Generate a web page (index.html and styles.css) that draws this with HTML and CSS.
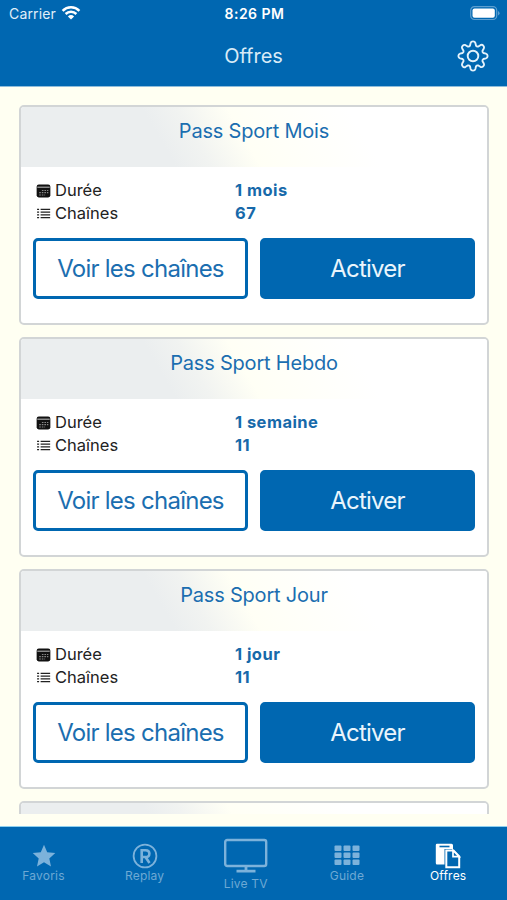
FILE: index.html
```html
<!DOCTYPE html>
<html lang="fr">
<head>
<meta charset="utf-8">
<title>Offres</title>
<link rel="stylesheet" href="styles.css">
</head>
<body>
<svg class="defs" aria-hidden="true">
  <symbol id="calendar" viewBox="0 0 14 14">
    <rect x=".6" y="1.5" width="12.8" height="12" rx="2" fill="#111"/>
    <path d="M1.2 3.900h11.600" stroke="#ccc" stroke-width=".9"/>
    <path d="M5.500 7h6M3 9h8.500M3 11.200h5.500" stroke="#888" stroke-width="1" stroke-dasharray="1.500 .9"/>
  </symbol>
  <symbol id="list" viewBox="0 0 14 12">
    <path d="M4.300 2.100h8.900M4.300 4.700h8.900M4.300 7.300h8.900M4.300 9.900h8.900" stroke="#222" stroke-width="1.200"/>
    <path d="M1 2.100h1.900M1 4.700h1.900M1 7.300h1.900M1 9.900h1.900" stroke="#222" stroke-width="1.200"/>
  </symbol>
</svg>
<div class="app">
  <header class="top">
    <div class="status">
      <div class="carrier"><span>Carrier</span>
        <svg width="20" height="16" viewBox="0 0 20 16" fill="none" stroke="#fff" stroke-width="2.500"><path d="M1.600 5.800a12 12 0 0 1 16.800 0M4.600 9a7.800 7.800 0 0 1 10.800 0"/><path d="M10 14.600 6.900 11.500a4.600 4.600 0 0 1 6.200 0z" fill="#fff" stroke="none"/></svg>
      </div>
      <div class="time">8:26 PM</div>
      <svg class="battery" width="30" height="15" viewBox="0 0 30 15"><rect x=".7" y=".7" width="26" height="12.800" rx="3.700" fill="none" stroke="#5d9fd0" stroke-width="1.200"/><rect x="2.500" y="2.500" width="22.300" height="9.200" rx="2" fill="#fff"/><path d="M28 5v4.400q1.600-.7 1.600-2.200T28 5" fill="#5d9fd0"/></svg>
    </div>
    <div class="nav">
      <h1>Offres</h1>
      <svg class="gear" width="32" height="32" viewBox="-16 -16 32 32" fill="none" stroke="#e4f2fb" stroke-width="1.900" stroke-linejoin="round"><circle r="5.300"/><path d="M-2.400 -12.900Q-1.900 -14.600 0 -14.600T2.400 -12.900L3 -10.400Q3.900 -9.100 5.300 -9.500L7.400 -10.800Q9 -11.700 10.300 -10.300T10.800 -7.400L9.500 -5.300Q9.100 -3.900 10.400 -3L12.900 -2.400Q14.600 -1.900 14.600 0T12.900 2.400L10.400 3Q9.100 3.900 9.500 5.300L10.800 7.400Q11.700 9 10.300 10.300T7.400 10.800L5.300 9.500Q3.900 9.100 3 10.400L2.400 12.900Q1.900 14.600 0 14.600T-2.400 12.900L-3 10.400Q-3.900 9.100 -5.300 9.500L-7.400 10.800Q-9 11.700 -10.300 10.300T-10.800 7.400L-9.500 5.300Q-9.100 3.900 -10.400 3L-12.900 2.400Q-14.600 1.900 -14.600 0T-12.900 -2.400L-10.400 -3Q-9.100 -3.900 -9.500 -5.300L-10.800 -7.400Q-11.700 -9 -10.300 -10.300T-7.400 -10.800L-5.300 -9.500Q-3.900 -9.100 -3 -10.400Z"/></svg>
    </div>
  </header>
  <main class="offers">
    <section class="card">
      <h2>Pass Sport Mois</h2>
      <dl>
        <dt><svg class="ico"><use href="#calendar"/></svg>Durée</dt><dd>1 mois</dd>
        <dt><svg class="ico list"><use href="#list"/></svg>Chaînes</dt><dd>67</dd>
      </dl>
      <div class="actions"><button class="outline">Voir les chaînes</button><button class="solid">Activer</button></div>
    </section>
    <section class="card">
      <h2>Pass Sport Hebdo</h2>
      <dl>
        <dt><svg class="ico"><use href="#calendar"/></svg>Durée</dt><dd>1 semaine</dd>
        <dt><svg class="ico list"><use href="#list"/></svg>Chaînes</dt><dd>11</dd>
      </dl>
      <div class="actions"><button class="outline">Voir les chaînes</button><button class="solid">Activer</button></div>
    </section>
    <section class="card">
      <h2>Pass Sport Jour</h2>
      <dl>
        <dt><svg class="ico"><use href="#calendar"/></svg>Durée</dt><dd>1 jour</dd>
        <dt><svg class="ico list"><use href="#list"/></svg>Chaînes</dt><dd>11</dd>
      </dl>
      <div class="actions"><button class="outline">Voir les chaînes</button><button class="solid">Activer</button></div>
    </section>
    <section class="card"><h2></h2></section>
  </main>
  <nav class="tabs">
    <a class="tab first"><svg width="26" height="26" viewBox="0 0 26 26"><path d="M13 1.800 16.200 9.200 24.300 10 18.300 15.500 20 23.500 13 19.300 6 23.500 7.700 15.500 1.700 10 9.800 9.200z" fill="currentColor"/></svg><span>Favoris</span></a>
    <a class="tab"><svg width="26" height="26" viewBox="0 0 26 26" fill="none" stroke="currentColor"><circle cx="13" cy="13" r="11.400" stroke-width="1.800"/><path d="M9.700 20V7.200h3.800q3.900 0 3.900 3.400t-3.900 3.400H9.700M13.500 14l4 6" stroke-width="2.600"/></svg><span>Replay</span></a>
    <a class="tab live"><svg width="44" height="36" viewBox="0 0 44 36" fill="none" stroke="currentColor"><rect x="1.200" y="2" width="41" height="26" rx="2" stroke-width="2.400"/><path d="M22 28v5M12.500 33.200h19" stroke-width="2.800"/></svg><span>Live TV</span></a>
    <a class="tab"><svg width="26" height="26" viewBox="0 0 26 26" fill="currentColor"><rect x=".5" y="2.500" width="7" height="5.500" rx="1"/><rect x="9.500" y="2.500" width="7" height="5.500" rx="1"/><rect x="18.500" y="2.500" width="7" height="5.500" rx="1"/><rect x=".5" y="9.500" width="7" height="5.500" rx="1"/><rect x="9.500" y="9.500" width="7" height="5.500" rx="1"/><rect x="18.500" y="9.500" width="7" height="5.500" rx="1"/><rect x=".5" y="16.500" width="7" height="5.500" rx="1"/><rect x="9.500" y="16.500" width="7" height="5.500" rx="1"/><rect x="18.500" y="16.500" width="7" height="5.500" rx="1"/></svg><span>Guide</span></a>
    <a class="tab active"><svg width="26" height="26" viewBox="0 0 26 26"><path d="M2 .7h14.500q1.500 0 1.500 1.500V6H9.500v15.500H2Q.8 21.500.8 20V2Q.8.7 2 .7z" fill="#fff"/><path d="M4.500 3.500h10" stroke="#0067b1" stroke-width="1.600"/><path d="M11.300 7.500h7.200l5.700 6V24.300H11.300z" fill="#0067b1" stroke="#fff" stroke-width="2"/><path d="M18 7.500v6.200h6.200z" fill="#0067b1" stroke="#fff" stroke-width="1.700"/></svg><span>Offres</span></a>
  </nav>
</div>
</body>
</html>
```
FILE: styles.css
```css
* { box-sizing: border-box; }
body { margin: 0; font-family: Inter, "Liberation Sans", sans-serif; background: #fffff2; }
.defs { display: none; }
.app { width: 507px; height: 900px; display: flex; flex-direction: column; overflow: hidden; }
.top { height: 86px; background: #0067b1; color: #fff; box-shadow: 0 1px 0 #8fbddb; flex: none; }
.status { height: 27px; display: grid; grid-template-columns: 1fr auto 1fr; align-items: center; padding: 0 7px 0 9px; }
.carrier { display: flex; align-items: center; gap: 5px; font-size: 14px; letter-spacing: .15px; color: #e0eff9; }
.carrier svg { margin-top: -1px; }
.time { font-size: 14px; font-weight: 600; letter-spacing: .5px; }
.battery { justify-self: end; }
.nav { height: 59px; display: grid; grid-template-columns: 1fr auto 1fr; align-items: center; padding: 0 18px 2px; }
h1 { grid-column: 2; margin: 0; font-size: 20px; font-weight: 400; color: #d9ebf7; }
.gear { justify-self: end; }
.offers { height: 728px; padding: 19px 18px 0 19px; overflow: hidden; display: flex; flex-direction: column; gap: 12px; flex: none; }
.card { height: 220px; flex: none; border: 2px solid #d2d5d6; border-radius: 5px; background: #fff; overflow: hidden; }
h2 { margin: 0; height: 60px; padding-top: 12px; text-align: center; font-size: 20px; line-height: 24px; letter-spacing: -.2px; font-weight: 400; color: #1b6eb0; background: linear-gradient(60deg, #ebeeef 0 31%, #f1f3f1 38%, #fffff5 48%, #fff 72%); }
dl { margin: 0; padding: 11px 0 0 15px; display: grid; grid-template-columns: 199px 1fr; grid-auto-rows: 23.300px; align-items: center; font-size: 16.500px; }
dt { display: flex; align-items: center; gap: 4px; color: #222; }
dd { margin: 0; font-weight: 700; color: #1769aa; letter-spacing: .45px; }
.ico { width: 15px; height: 15px; margin-top: 2px; }
.ico.list { height: 13px; }
.actions { display: flex; gap: 12px; padding: 13px 12px 0; }
button { width: 215px; height: 61px; border: 3px solid #0067b1; border-radius: 5px; padding: 0; font: 400 24px Inter, "Liberation Sans", sans-serif; letter-spacing: -.75px; }
.outline { background: #fff; color: #1b6eb0; }
.solid { background: #0067b1; color: #eaf5fc; }
.tabs { height: 73px; margin-top: 13px; background: #0067b1; display: grid; grid-template-columns: 94px repeat(4, 101.200px); box-shadow: 0 -1px 0 #8fd0ef; flex: none; }
.tab { display: flex; flex-direction: column; align-items: center; padding-top: 16px; color: #6da9d4; font-size: 12px; line-height: 15px; letter-spacing: .2px; }
.tab.first { padding-right: 7px; }
.tab svg { flex: none; opacity: .9; color: #8abbe0; }
.tab span { margin-top: -1px; }
.tab.live { padding-top: 11px; }
.tab.live span { margin-top: 2px; }
.tab.active { color: #fff; }
.tab.active svg { opacity: 1; color: #fff; }
```
